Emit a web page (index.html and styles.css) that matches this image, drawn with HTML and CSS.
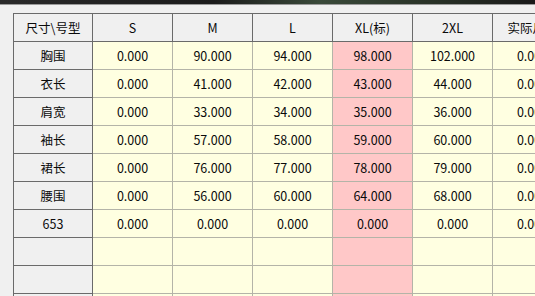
FILE: index.html
```html
<!DOCTYPE html>
<html lang="zh">
<head>
<meta charset="utf-8">
<title>尺寸表</title>
<link rel="stylesheet" href="styles.css">
</head>
<body>
<div class="topbar"></div>
<div class="panel">
<table class="grid">
<colgroup>
<col class="c0"><col class="c"><col class="c"><col class="c"><col class="c"><col class="c"><col class="c">
</colgroup>
<thead>
<tr><th>尺寸\号型</th><th>S</th><th>M</th><th>L</th><th>XL(标)</th><th>2XL</th><th>实际尺寸</th></tr>
</thead>
<tbody>
<tr><td class="name">胸围</td><td>0.000</td><td>90.000</td><td>94.000</td><td class="std">98.000</td><td>102.000</td><td>0.000</td></tr>
<tr><td class="name">衣长</td><td>0.000</td><td>41.000</td><td>42.000</td><td class="std">43.000</td><td>44.000</td><td>0.000</td></tr>
<tr><td class="name">肩宽</td><td>0.000</td><td>33.000</td><td>34.000</td><td class="std">35.000</td><td>36.000</td><td>0.000</td></tr>
<tr><td class="name">袖长</td><td>0.000</td><td>57.000</td><td>58.000</td><td class="std">59.000</td><td>60.000</td><td>0.000</td></tr>
<tr><td class="name">裙长</td><td>0.000</td><td>76.000</td><td>77.000</td><td class="std">78.000</td><td>79.000</td><td>0.000</td></tr>
<tr><td class="name">腰围</td><td>0.000</td><td>56.000</td><td>60.000</td><td class="std">64.000</td><td>68.000</td><td>0.000</td></tr>
<tr><td class="name">653</td><td>0.000</td><td>0.000</td><td>0.000</td><td class="std">0.000</td><td>0.000</td><td>0.000</td></tr>
<tr><td class="name"></td><td></td><td></td><td></td><td class="std"></td><td></td><td></td></tr>
<tr><td class="name"></td><td></td><td></td><td></td><td class="std"></td><td></td><td></td></tr>
<tr><td class="name"></td><td></td><td></td><td></td><td class="std"></td><td></td><td></td></tr>
</tbody>
</table>
</div>
</body>
</html>
```
FILE: styles.css
```css
html, body {
  margin: 0;
  padding: 0;
  background: #f0f0f0;
  overflow: hidden;
  width: 535px;
  height: 296px;
}
body {
  font-family: "Noto Sans CJK SC", "Noto Sans", sans-serif;
  font-size: 12.5px;
  color: #0a0a0a;
}
.topbar {
  height: 4px;
  background: linear-gradient(90deg, #2a2a2a 0%, #1c1c1c 40%, #3a4a3a 60%, #2a3328 80%, #1a1a1a 100%);
  border-bottom: 1px solid #9a9a9a;
}
.panel {
  padding: 8px 0 0 13px;
}
.grid {
  border-collapse: collapse;
  table-layout: fixed;
  width: 560px;
}
.c0 { width: 79px; }
.c { width: 80px; }
.grid th, .grid td {
  height: 27px;
  padding: 0;
  text-align: center;
  vertical-align: middle;
  white-space: nowrap;
  overflow: hidden;
  line-height: 14px;
}
.grid th {
  background: #f0f0f0;
  font-weight: normal;
  border: 1px solid #6a6a6a;
}
.grid td {
  background: #ffffe1;
  border: 1px solid #b4b4a8;
}
.grid td.name {
  background: #f0f0f0;
  border: 1px solid #6a6a6a;
}
.grid td.std {
  background: #ffc8c8;
}
```
